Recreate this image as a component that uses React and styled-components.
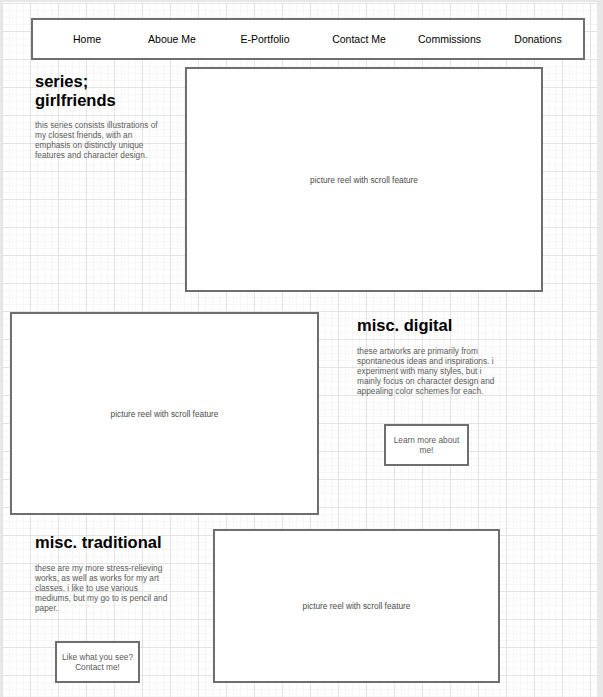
import React from "react";
import styled, { createGlobalStyle } from "styled-components";

const Global = createGlobalStyle`
  html, body { margin: 0; padding: 0; }
  body {
    background: #e8e8e8;
    font-family: "Liberation Sans", Arial, sans-serif;
  }
`;

const Canvas = styled.div`
  margin: 2px 6px 0 2px;
  min-height: 695px;
  box-sizing: border-box;
  background-color: #ffffff;
  background-image:
    linear-gradient(#e3e3e3 1px, transparent 1px),
    linear-gradient(90deg, #e3e3e3 1px, transparent 1px),
    linear-gradient(#f6f6f6 1px, transparent 1px),
    linear-gradient(90deg, #f6f6f6 1px, transparent 1px);
  background-size: 28px 28px, 28px 28px, 7px 7px, 7px 7px;
  background-position: 0 1px, 0 1px, 0 1px, 0 1px;
  overflow: hidden;
`;

const Nav = styled.nav`
  margin: 16px 0 0 29px;
  width: 554px;
  height: 42px;
  box-sizing: border-box;
  border: 2px solid #6e6e6e;
  background: #fff;
  display: grid;
  grid-template-columns: 80px 90px 96px 92px 89px 88px;
  padding-left: 14px;
  align-items: center;
`;

const NavLink = styled.span`
  text-align: center;
  font-size: 10.5px;
  color: #000;
  white-space: nowrap;
`;

const Row = styled.section`
  display: flex;
  align-items: flex-start;
  margin-top: ${(p) => p.$top}px;
`;

const Column = styled.div`
  display: flex;
  flex-direction: column;
  align-items: flex-start;
  width: ${(p) => p.$width}px;
  margin-left: ${(p) => p.$left}px;
  padding-top: ${(p) => p.$pad}px;
  flex-shrink: 0;
`;

const Title = styled.h2`
  margin: 0;
  font-size: 16.5px;
  line-height: 19px;
  font-weight: bold;
  color: #000;
`;

const Desc = styled.p`
  margin: ${(p) => p.$gap}px 0 0 0;
  width: ${(p) => p.$width}px;
  font-size: 8.3px;
  line-height: 9.9px;
  color: #5a5a5a;
`;

const Reel = styled.div`
  width: ${(p) => p.$w}px;
  height: ${(p) => p.$h}px;
  margin-left: ${(p) => p.$left || 0}px;
  box-sizing: border-box;
  border: 2px solid #6e6e6e;
  background: #fff;
  display: flex;
  align-items: center;
  justify-content: center;
  font-size: 8.3px;
  color: #4a4a4a;
  flex-shrink: 0;
`;

const CallButton = styled.div`
  margin: 27px 0 0 ${(p) => p.$left}px;
  width: 85px;
  height: 42px;
  box-sizing: border-box;
  border: 2px solid #6e6e6e;
  background: #fff;
  display: flex;
  align-items: center;
  justify-content: center;
  text-align: center;
  font-size: 8.3px;
  line-height: 10px;
  color: #5a5a5a;
  padding: 0 2px;
`;

const links = ["Home", "Aboue Me", "E-Portfolio", "Contact Me", "Commissions", "Donations"];

export default function App() {
  return (
    <>
      <Global />
      <Canvas>
        <Nav>
          {links.map((l) => (
            <NavLink key={l}>{l}</NavLink>
          ))}
        </Nav>

        <Row $top={7}>
          <Column $width={150} $left={33} $pad={4.5}>
            <Title>
              series;
              <br />
              girlfriends
            </Title>
            <Desc $gap={11.5} $width={127}>
              this series consists illustrations of my closest friends, with an emphasis on distinctly unique features and character design.
            </Desc>
          </Column>
          <Reel $w={358} $h={225}>picture reel with scroll feature</Reel>
        </Row>

        <Row $top={20}>
          <Reel $w={309} $h={203} $left={8}>picture reel with scroll feature</Reel>
          <Column $width={160} $left={38} $pad={3.5}>
            <Title>misc. digital</Title>
            <Desc $gap={12.5} $width={142}>
              these artworks are primarily from spontaneous ideas and inspirations. i experiment with many styles, but i mainly focus on character design and appealing color schemes for each.
            </Desc>
            <CallButton $left={27}>Learn more about me!</CallButton>
          </Column>
        </Row>

        <Row $top={14}>
          <Column $width={178} $left={33} $pad={3.5}>
            <Title>misc. traditional</Title>
            <Desc $gap={12.5} $width={136}>
              these are my more stress-relieving works, as well as works for my art classes. i like to use various mediums, but my go to is pencil and paper.
            </Desc>
            <CallButton $left={20}>Like what you see? Contact me!</CallButton>
          </Column>
          <Reel $w={287} $h={154}>picture reel with scroll feature</Reel>
        </Row>
      </Canvas>
    </>
  );
}
